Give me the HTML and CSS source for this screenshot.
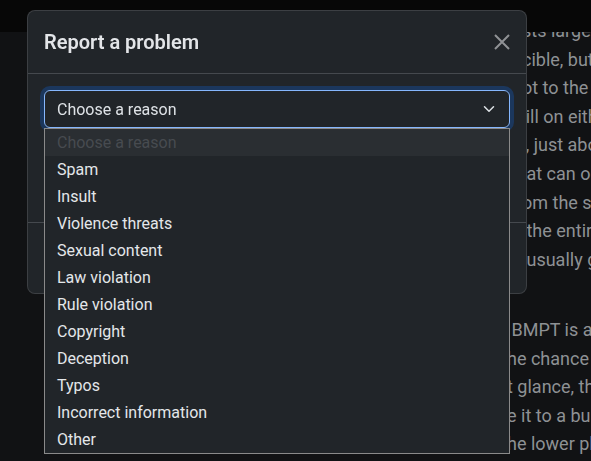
FILE: index.html
```html
<!DOCTYPE html>
<html lang="en">
<head>
  <meta charset="UTF-8" />
  <title>Report a problem</title>
  <meta name="viewport" content="width=device-width, initial-scale=1" />
  <link rel="stylesheet" href="styles.css">
</head>
<body>

  <header class="topbar"></header>

  <main class="article">
    <p class="para para-first">
      <span class="line">sts large</span>
      <span class="line">cible, but</span>
      <span class="line">ot to the</span>
      <span class="line">&thinsp;ill on eith</span>
      <span class="line">&thinsp;, just abo</span>
      <span class="line">&nbsp;at can o</span>
      <span class="line">om the s</span>
      <span class="line">&nbsp;the entir</span>
      <span class="line">&nbsp;usually g</span>
    </p>
    <p class="para para-second">
      <span class="line">&nbsp;BMPT is a</span>
      <span class="line">he chance</span>
      <span class="line">t glance, th</span>
      <span class="line">e it to a bu</span>
      <span class="line">he lower pl</span>
    </p>
  </main>

  <div class="modal" role="dialog">
    <div class="modal-header">
      <h5 class="modal-title">Report a problem</h5>
      <button class="btn-close" aria-label="Close">
        <svg width="16" height="16" viewBox="0 0 16 16">
          <path d="M1 1 15 15M15 1 1 15" stroke="#909295" stroke-width="2" fill="none" />
        </svg>
      </button>
    </div>

    <div class="modal-body">
      <div class="reason-select">
        <div class="select-box">
          <span>Choose a reason</span>
          <svg width="12" height="12" viewBox="0 0 16 16">
            <path d="m2 5 6 6 6-6" stroke="#dee2e6" stroke-width="2" stroke-linecap="round" stroke-linejoin="round" fill="none" />
          </svg>
        </div>
        <ul class="select-options">
          <li class="option option-disabled">Choose a reason</li>
          <li class="option">Spam</li>
          <li class="option">Insult</li>
          <li class="option">Violence threats</li>
          <li class="option">Sexual content</li>
          <li class="option">Law violation</li>
          <li class="option">Rule violation</li>
          <li class="option">Copyright</li>
          <li class="option">Deception</li>
          <li class="option">Typos</li>
          <li class="option">Incorrect information</li>
          <li class="option">Other</li>
        </ul>
      </div>
      <textarea class="comment" placeholder="Comment"></textarea>
    </div>

    <div class="modal-footer">
      <button class="btn btn-secondary">Cancel</button>
      <button class="btn btn-primary">Send</button>
    </div>
  </div>

</body>
</html>
```

FILE: styles.css
```css
:root {
  --color-page: #111214;
  --color-topbar: #070707;
  --color-modal: #212529;
  --color-text: #dee2e6;
  --color-muted-text: #8e9194;
  --color-divider: #45494e;
  --color-focus: #86b7fe;
  --radius: 8px;
}

html,
body {
  overflow: hidden;
}

body {
  margin: 0;
  background-color: var(--color-page);
  font-family: Roboto, 'Liberation Sans', sans-serif;
  color: var(--color-text);
}

.topbar {
  position: fixed;
  top: 0;
  left: 0;
  right: 0;
  height: 32px;
  background-color: var(--color-topbar);
  z-index: 1;
}

.article {
  padding-top: 17px;
  font-size: 18px;
  line-height: 28.6px;
  color: var(--color-muted-text);
}

.para {
  margin: 0;
}

.para-first {
  padding-left: 522px;
}

.para-second {
  margin-top: 41.6px;
  padding-left: 507px;
}

.line {
  display: block;
  white-space: nowrap;
}

.modal {
  position: fixed;
  top: 10px;
  left: 27px;
  width: 500px;
  box-sizing: border-box;
  background-color: var(--color-modal);
  border: 1px solid rgba(255, 255, 255, 0.12);
  border-radius: var(--radius);
  z-index: 2;
}

.modal-header {
  display: flex;
  align-items: center;
  padding: 16px;
  border-bottom: 1px solid var(--color-divider);
}

.modal-title {
  flex: 1;
  margin: 0;
  font-size: 20px;
  line-height: 30px;
  font-weight: 600;
  color: #e3e5e8;
}

.btn-close {
  display: flex;
  width: 16px;
  height: 16px;
  padding: 0;
  border: none;
  background: none;
  cursor: pointer;
}

.modal-body {
  padding: 16px;
}

.reason-select {
  position: relative;
}

.select-box {
  display: flex;
  align-items: center;
  justify-content: space-between;
  height: 38px;
  box-sizing: border-box;
  padding: 0 14px 0 12px;
  border: 1px solid var(--color-focus);
  border-radius: 6px;
  box-shadow: 0 0 0 4px rgba(13, 110, 253, 0.25);
  font-size: 16px;
  color: var(--color-text);
}

.select-options {
  position: absolute;
  top: 100%;
  left: 0;
  right: 0;
  margin: 0;
  padding: 0;
  list-style: none;
  background-color: var(--color-modal);
  border: 1px solid #8a8a8a;
  z-index: 3;
}

.option {
  height: 27px;
  padding: 0 12px;
  font-size: 16px;
  line-height: 27px;
  color: #e4e7ea;
}

.option-disabled {
  background-color: #2a2e32;
  color: #474b50;
}

.comment {
  display: block;
  width: 100%;
  height: 62px;
  box-sizing: border-box;
  margin-top: 16px;
  padding: 6px 12px;
  background-color: var(--color-modal);
  border: 1px solid var(--color-divider);
  border-radius: 6px;
  color: var(--color-text);
  font-family: inherit;
  font-size: 16px;
  resize: none;
}

.modal-footer {
  display: flex;
  justify-content: flex-end;
  gap: 8px;
  padding: 16px;
  border-top: 1px solid var(--color-divider);
}

.btn {
  height: 38px;
  padding: 0 12px;
  border: none;
  border-radius: 6px;
  font-family: inherit;
  font-size: 16px;
  color: #fff;
}

.btn-secondary {
  background-color: #6c757d;
}

.btn-primary {
  background-color: #0d6efd;
}
```
